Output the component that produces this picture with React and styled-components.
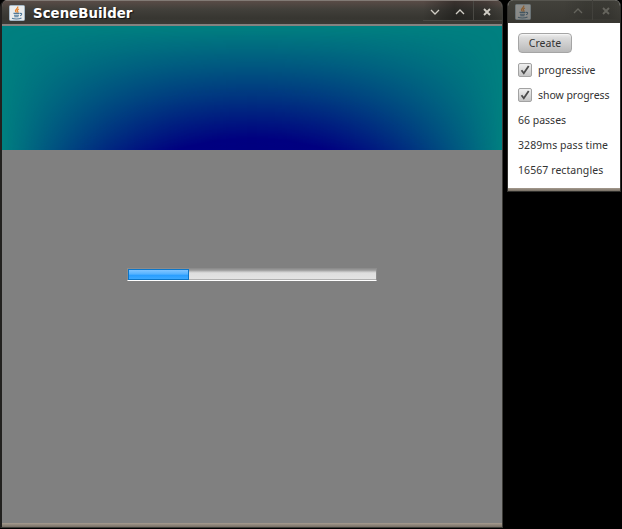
import React from 'react';
import styled, { createGlobalStyle } from 'styled-components';

const Global = createGlobalStyle`
  * { box-sizing: border-box; }
  body { margin: 0; background: #000; overflow: hidden; }
`;
const Desktop = styled.main`
  width: 622px; height: 529px; background: #000;
  display: flex; align-items: flex-start; gap: 4px;
`;
const MainWindow = styled.section`
  width: 503px; height: 528px;
  border: solid #3c3b37; border-width: 0 1px 1px 2px; border-left-color: #22211f;
  border-radius: 7px 7px 0 0; overflow: hidden;
  display: flex; flex-direction: column; background: #808080;
`;
const ToolWindow = styled.section`
  width: 114px; height: 192px;
  border: solid #302f2c; border-width: 0 1px 1px 1px;
  border-radius: 6px 6px 0 0; overflow: hidden;
  display: flex; flex-direction: column; background: #fff;
`;
const MainTitle = styled.header`
  height: 24px; flex: none; display: flex; align-items: center; padding-left: 7px;
  border-top: 1px solid #817a75;
  background: linear-gradient(#594c47, #42403b 35%, #373631 75%, #3b3a35);
`;
const ToolTitle = styled(MainTitle)`
  height: 23px; border-top-color: #55544e;
  background: linear-gradient(#42413b, #383732);
`;
const Title = styled.h1`
  margin: 2px 0 0 8px; flex: 1;
  font: bold 13.33px/18px "DejaVu Sans", sans-serif; letter-spacing: 0.04px;
  color: #fff; text-shadow: 1px 1px 1px #111;
`;
const Controls = styled.div`
  display: flex; align-self: stretch; align-items: center;
  width: ${p => p.$w}px; margin-bottom: 3px; margin-left: auto;
  background: linear-gradient(90deg, transparent, rgba(0,0,0,${p => p.$dim ? 0.1 : 0.35}) 40%, rgba(0,0,0,${p => p.$dim ? 0.1 : 0.2}) 80%, transparent);
  border-bottom: 1px solid ${p => p.$dim ? '#393833' : '#4a4944'};
`;
const Control = styled.button`
  width: ${p => p.$w}px; height: 20px; padding: 2px 0 0; border: 0; background: none;
  border-left: ${p => p.$sep ? `1px solid ${p.$dim ? '#42413c' : '#4a4944'}` : '0'};
  display: flex; align-items: center; justify-content: center;
  color: ${p => p.$dim ? '#65645d' : '#d0cdc5'};
`;
const Stripe = styled.div`height: 2px; flex: none; background: #858280;`;
const Canvas = styled.div`height: 124px; flex: none; background: #008080;`;
const falloff = (rgb, curve, n = 48) => Array.from({ length: n + 1 }, (_, i) => {
  const t = i / n;
  return `rgba(${rgb},${curve(t).toFixed(4)}) ${(t * 100).toFixed(1)}%`;
}).join(', ');
const Gain = styled.div`height: 100%; filter: url(#gain);`;
const Glow = styled.div`
  height: 100%;
  background: linear-gradient(90deg, ${falloff('0,0,128', t => Math.sin(Math.PI * t))});
  mask-image: linear-gradient(180deg, ${falloff('0,0,0', t => t - 0.04 * Math.sin(Math.PI * t))});
`;
const Defs = styled.svg`display: block; width: 0; height: 0;`;
const Scene = styled.div`
  flex: 1; display: flex; align-items: flex-start; justify-content: center; padding-top: 118px;
`;
const Track = styled.div`
  width: 250px; height: 13px; border: 1px solid #8c8c8c; border-bottom-color: #fff;
  background: linear-gradient(#969696 0 1px, #b2b2b2 2px, #cbcbcb 3px, #dedede 4px, #e3e3e3 10px, #b0b0b0 10px);
`;
const Fill = styled.div`
  width: 61px; height: 11px; border: 1px solid #0c75c7;
  background: linear-gradient(#82c5ff, #55b2ff 45%, #2a9eff 60%, #3ca9ff);
`;
const Bottom = styled.div`
  height: ${p => p.$h}px; flex: none;
  background: linear-gradient(#a59b8f, #776f65);
`;
const Panel = styled.div`
  flex: 1; padding: 10px 0 0 10px; display: flex; flex-direction: column; align-items: flex-start;
  font: 10.5px/15px "Noto Sans", sans-serif; color: #333;
`;
const CreateButton = styled.button`
  width: 54px; height: 20px; margin: 0 0 7px; padding: 0; border: 1px solid #a5a5a5; border-radius: 4px;
  background: linear-gradient(#f0f0f0, #dcdcdc 20%, #b9b9b9);
  box-shadow: inset 0 1px #f4f4f4;
  font: inherit; line-height: 18px; color: #333;
`;
const Row = styled.label`
  height: 20px; margin-bottom: 5px; display: flex; align-items: center; gap: 6px; white-space: nowrap;
`;
const Box = styled.span`
  width: 14px; height: 14px; border: 1px solid #a2a2a2; border-radius: 2px;
  background: linear-gradient(#f0f0f0, #c4c4c4); display: flex; align-items: center; justify-content: center;
`;
const Text = styled.span`
  display: block; letter-spacing: ${p => p.$ls || 0}px;
`;
const JavaSvg = styled.svg`flex: none; opacity: ${p => p.$dim ? 0.45 : 1};`;

function JavaIcon({ dim }) {
  return (
    <JavaSvg width="16" height="16" viewBox="0 0 16 16" $dim={dim}>
      <rect x=".5" y=".5" width="15" height="15" rx="1" fill="#e9eced" stroke="#a5b8c6" />
      <path d="M8.7 1.5c1 2-3.5 3-2 5 .4.7 1 .9 1 .9M10 4c-2 .8-2 1.6-1.3 2.4.5.6.1 1-.3 1.2" fill="none" stroke="#e7852f" strokeWidth="1.3" />
      <path d="M4.5 8.4h6M5 10.2h5M5.3 11.8h4.2M3 13.2c2 1 7 1 9.5-.2M11 8.5c2.5-.6 2 1.8 0 2.2" fill="none" stroke="#4f7898" strokeWidth="1.1" />
    </JavaSvg>
  );
}
const paths = { down: 'M1 3l4 4 4-4', up: 'M1 7l4-4 4 4', close: 'M2 2l6 6M8 2l-6 6' };
const Glyph = ({ kind }) => (
  <svg width="10" height="10" viewBox="0 0 10 10">
    <path d={paths[kind]} fill="none" stroke="currentColor" strokeWidth={kind === 'close' ? 1.9 : 1.3} />
  </svg>
);
const Check = ({ text, ls }) => (
  <Row>
    <Box><svg width="10" height="10" viewBox="0 0 10 10"><path d="M1.5 5.2l2.3 3L8.7 1" fill="none" stroke="#4a4a4a" strokeWidth="1.8" /></svg></Box>
    <Text $ls={ls}>{text}</Text>
  </Row>
);

export default function App() {
  return (
    <Desktop>
      <Global />
      <MainWindow>
        <MainTitle>
          <JavaIcon />
          <Title>SceneBuilder</Title>
          <Controls $w={79}>
            <Control $w={24}><Glyph kind="down" /></Control>
            <Control $w={26}><Glyph kind="up" /></Control>
            <Control $w={27} $sep><Glyph kind="close" /></Control>
          </Controls>
        </MainTitle>
        <Stripe />
        <Canvas>
          <Defs>
            <filter id="gain" x="0" y="0" width="1" height="1" colorInterpolationFilters="sRGB">
              <feComponentTransfer><feFuncA type="linear" slope="1.12" /></feComponentTransfer>
            </filter>
          </Defs>
          <Gain><Glow /></Gain>
        </Canvas>
        <Scene><Track><Fill /></Track></Scene>
        <Bottom $h={4} />
      </MainWindow>
      <ToolWindow>
        <ToolTitle>
          <JavaIcon dim />
          <Controls $w={57} $dim>
            <Control $w={29} $dim><Glyph kind="up" /></Control>
            <Control $w={27} $sep $dim><Glyph kind="close" /></Control>
          </Controls>
        </ToolTitle>
        <Panel>
          <CreateButton>Create</CreateButton>
          <Check text="progressive" />
          <Check text="show progress" ls={-0.05} />
          <Row><Text>66 passes</Text></Row>
          <Row><Text $ls={0.07}>3289ms pass time</Text></Row>
          <Row><Text $ls={0.07}>16567 rectangles</Text></Row>
        </Panel>
        <Bottom $h={3} />
      </ToolWindow>
    </Desktop>
  );
}
